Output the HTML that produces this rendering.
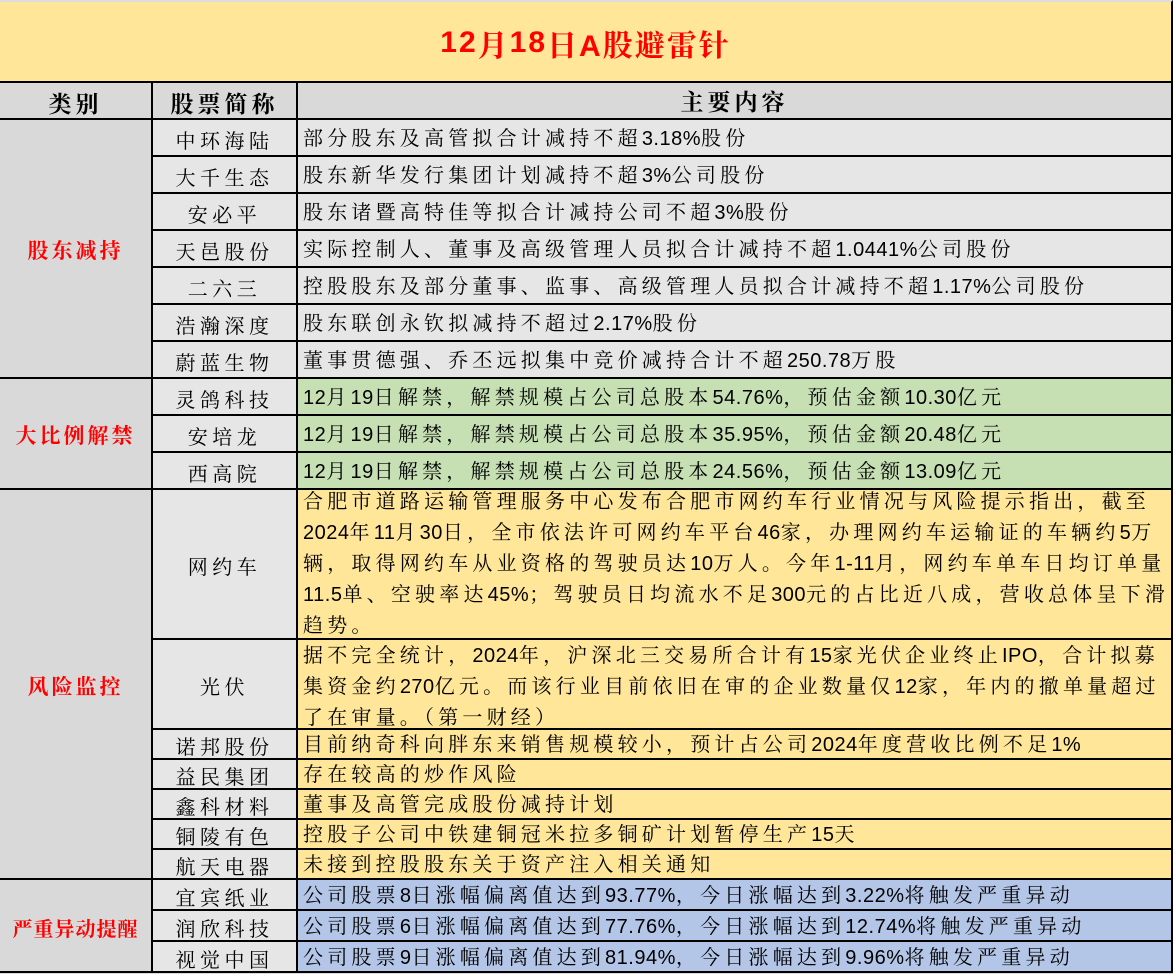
<!DOCTYPE html>
<html><head><meta charset="utf-8"><style>
*{margin:0;padding:0;box-sizing:border-box}
body{width:1173px;height:973px;background:#D9D9D9;position:relative;overflow:hidden;font-family:"Liberation Sans","Noto Serif CJK SC",serif;color:#000}
.c{position:absolute;border-right:2px solid #000;border-bottom:2px solid #000;display:flex;align-items:center;white-space:nowrap;padding-top:3px}
.a{left:0;width:153px;justify-content:center;background:#D9D9D9;color:#f00;font-weight:bold;font-size:21px;letter-spacing:3px}
.b{left:153px;width:145px;justify-content:center;background:#E7E6E6;font-size:20px;letter-spacing:4.5px}
.t{left:298px;width:875px;padding-left:5px;background:#E7E6E6;font-size:20px;letter-spacing:4.2px;line-height:31px}
.g{background:#C6E0B4}.y{background:#FFE699}.u{background:#B4C6E7}
.n{letter-spacing:0.5px}
.h{font-weight:bold;font-size:23px;color:#000;letter-spacing:4px}
</style></head><body>
<div class="c" style="left:0;top:0;width:1173px;height:83px;background:#FFE699;justify-content:center;border-top:2px solid #ddd;color:#f00;font-weight:bold;font-size:30px;letter-spacing:2px"><span style="letter-spacing:2px">12</span>月<span style="letter-spacing:2px">18</span>日A股避雷针</div>

<div class="c a h" style="top:83px;height:37px;background:#D9D9D9">类别</div>
<div class="c b h" style="top:83px;height:37px;background:#D9D9D9">股票简称</div>
<div class="c t h" style="top:83px;height:37px;background:#D9D9D9;justify-content:center;padding-left:0">主要内容</div>

<div class="c a" style="top:120px;height:259px">股东减持</div>
<div class="c b" style="top:120px;height:37px">中环海陆</div><div class="c t" style="top:120px;height:37px">部分股东及高管拟合计减持不超<span class="n">3.18%</span>股份</div>
<div class="c b" style="top:157px;height:37px">大千生态</div><div class="c t" style="top:157px;height:37px">股东新华发行集团计划减持不超<span class="n">3%</span>公司股份</div>
<div class="c b" style="top:194px;height:37px">安必平</div><div class="c t" style="top:194px;height:37px">股东诸暨高特佳等拟合计减持公司不超<span class="n">3%</span>股份</div>
<div class="c b" style="top:231px;height:37px">天邑股份</div><div class="c t" style="top:231px;height:37px">实际控制人、董事及高级管理人员拟合计减持不超<span class="n">1.0441%</span>公司股份</div>
<div class="c b" style="top:268px;height:37px">二六三</div><div class="c t" style="top:268px;height:37px">控股股东及部分董事、监事、高级管理人员拟合计减持不超<span class="n">1.17%</span>公司股份</div>
<div class="c b" style="top:305px;height:37px">浩瀚深度</div><div class="c t" style="top:305px;height:37px">股东联创永钦拟减持不超过<span class="n">2.17%</span>股份</div>
<div class="c b" style="top:342px;height:37px">蔚蓝生物</div><div class="c t" style="top:342px;height:37px">董事贯德强、乔丕远拟集中竞价减持合计不超<span class="n">250.78</span>万股</div>

<div class="c a" style="top:379px;height:111px">大比例解禁</div>
<div class="c b" style="top:379px;height:37px">灵鸽科技</div><div class="c t g" style="top:379px;height:37px"><span class="n">12</span>月<span class="n">19</span>日解禁，解禁规模占公司总股本<span class="n">54.76%</span>，预估金额<span class="n">10.30</span>亿元</div>
<div class="c b" style="top:416px;height:37px">安培龙</div><div class="c t g" style="top:416px;height:37px"><span class="n">12</span>月<span class="n">19</span>日解禁，解禁规模占公司总股本<span class="n">35.95%</span>，预估金额<span class="n">20.48</span>亿元</div>
<div class="c b" style="top:453px;height:37px">西高院</div><div class="c t g" style="top:453px;height:37px"><span class="n">12</span>月<span class="n">19</span>日解禁，解禁规模占公司总股本<span class="n">24.56%</span>，预估金额<span class="n">13.09</span>亿元</div>

<div class="c a" style="top:490px;height:390px">风险监控</div>
<div class="c b" style="top:490px;height:150px">网约车</div><div class="c t y" style="top:490px;height:150px;align-items:flex-start;padding-top:0"><div style="margin-top:-3px">合肥市道路运输管理服务中心发布合肥市网约车行业情况与风险提示指出，截至<br><span class="n">2024</span>年<span class="n">11</span>月<span class="n">30</span>日，全市依法许可网约车平台<span class="n">46</span>家，办理网约车运输证的车辆约<span class="n">5</span>万<br>辆，取得网约车从业资格的驾驶员达<span class="n">10</span>万人。今年<span class="n">1-11</span>月，网约车单车日均订单量<br><span class="n">11.5</span>单、空驶率达<span class="n">45%</span>；驾驶员日均流水不足<span class="n">300</span>元的占比近八成，营收总体呈下滑<br>趋势。</div></div>
<div class="c b" style="top:640px;height:90px">光伏</div><div class="c t y" style="top:640px;height:90px;align-items:flex-start;padding-top:1px"><div>据不完全统计，<span class="n">2024</span>年，沪深北三交易所合计有<span class="n">15</span>家光伏企业终止<span class="n">IPO</span>，合计拟募<br>集资金约<span class="n">270</span>亿元。而该行业目前依旧在审的企业数量仅<span class="n">12</span>家，年内的撤单量超过<br>了在审量。（第一财经）</div></div>
<div class="c b" style="top:730px;height:30px">诺邦股份</div><div class="c t y" style="top:730px;height:30px">目前纳奇科向胖东来销售规模较小，预计占公司<span class="n">2024</span>年度营收比例不足<span class="n">1%</span></div>
<div class="c b" style="top:760px;height:30px">益民集团</div><div class="c t y" style="top:760px;height:30px">存在较高的炒作风险</div>
<div class="c b" style="top:790px;height:30px">鑫科材料</div><div class="c t y" style="top:790px;height:30px">董事及高管完成股份减持计划</div>
<div class="c b" style="top:820px;height:30px">铜陵有色</div><div class="c t y" style="top:820px;height:30px">控股子公司中铁建铜冠米拉多铜矿计划暂停生产<span class="n">15</span>天</div>
<div class="c b" style="top:850px;height:30px">航天电器</div><div class="c t y" style="top:850px;height:30px">未接到控股股东关于资产注入相关通知</div>

<div class="c a" style="top:880px;height:93px;font-size:20px;letter-spacing:1px">严重异动提醒</div>
<div class="c b" style="top:880px;height:31px">宜宾纸业</div><div class="c t u" style="top:880px;height:31px">公司股票<span class="n">8</span>日涨幅偏离值达到<span class="n">93.77%</span>，今日涨幅达到<span class="n">3.22%</span>将触发严重异动</div>
<div class="c b" style="top:911px;height:31px">润欣科技</div><div class="c t u" style="top:911px;height:31px">公司股票<span class="n">6</span>日涨幅偏离值达到<span class="n">77.76%</span>，今日涨幅达到<span class="n">12.74%</span>将触发严重异动</div>
<div class="c b" style="top:942px;height:31px">视觉中国</div><div class="c t u" style="top:942px;height:31px">公司股票<span class="n">9</span>日涨幅偏离值达到<span class="n">81.94%</span>，今日涨幅达到<span class="n">9.96%</span>将触发严重异动</div>
</body></html>
